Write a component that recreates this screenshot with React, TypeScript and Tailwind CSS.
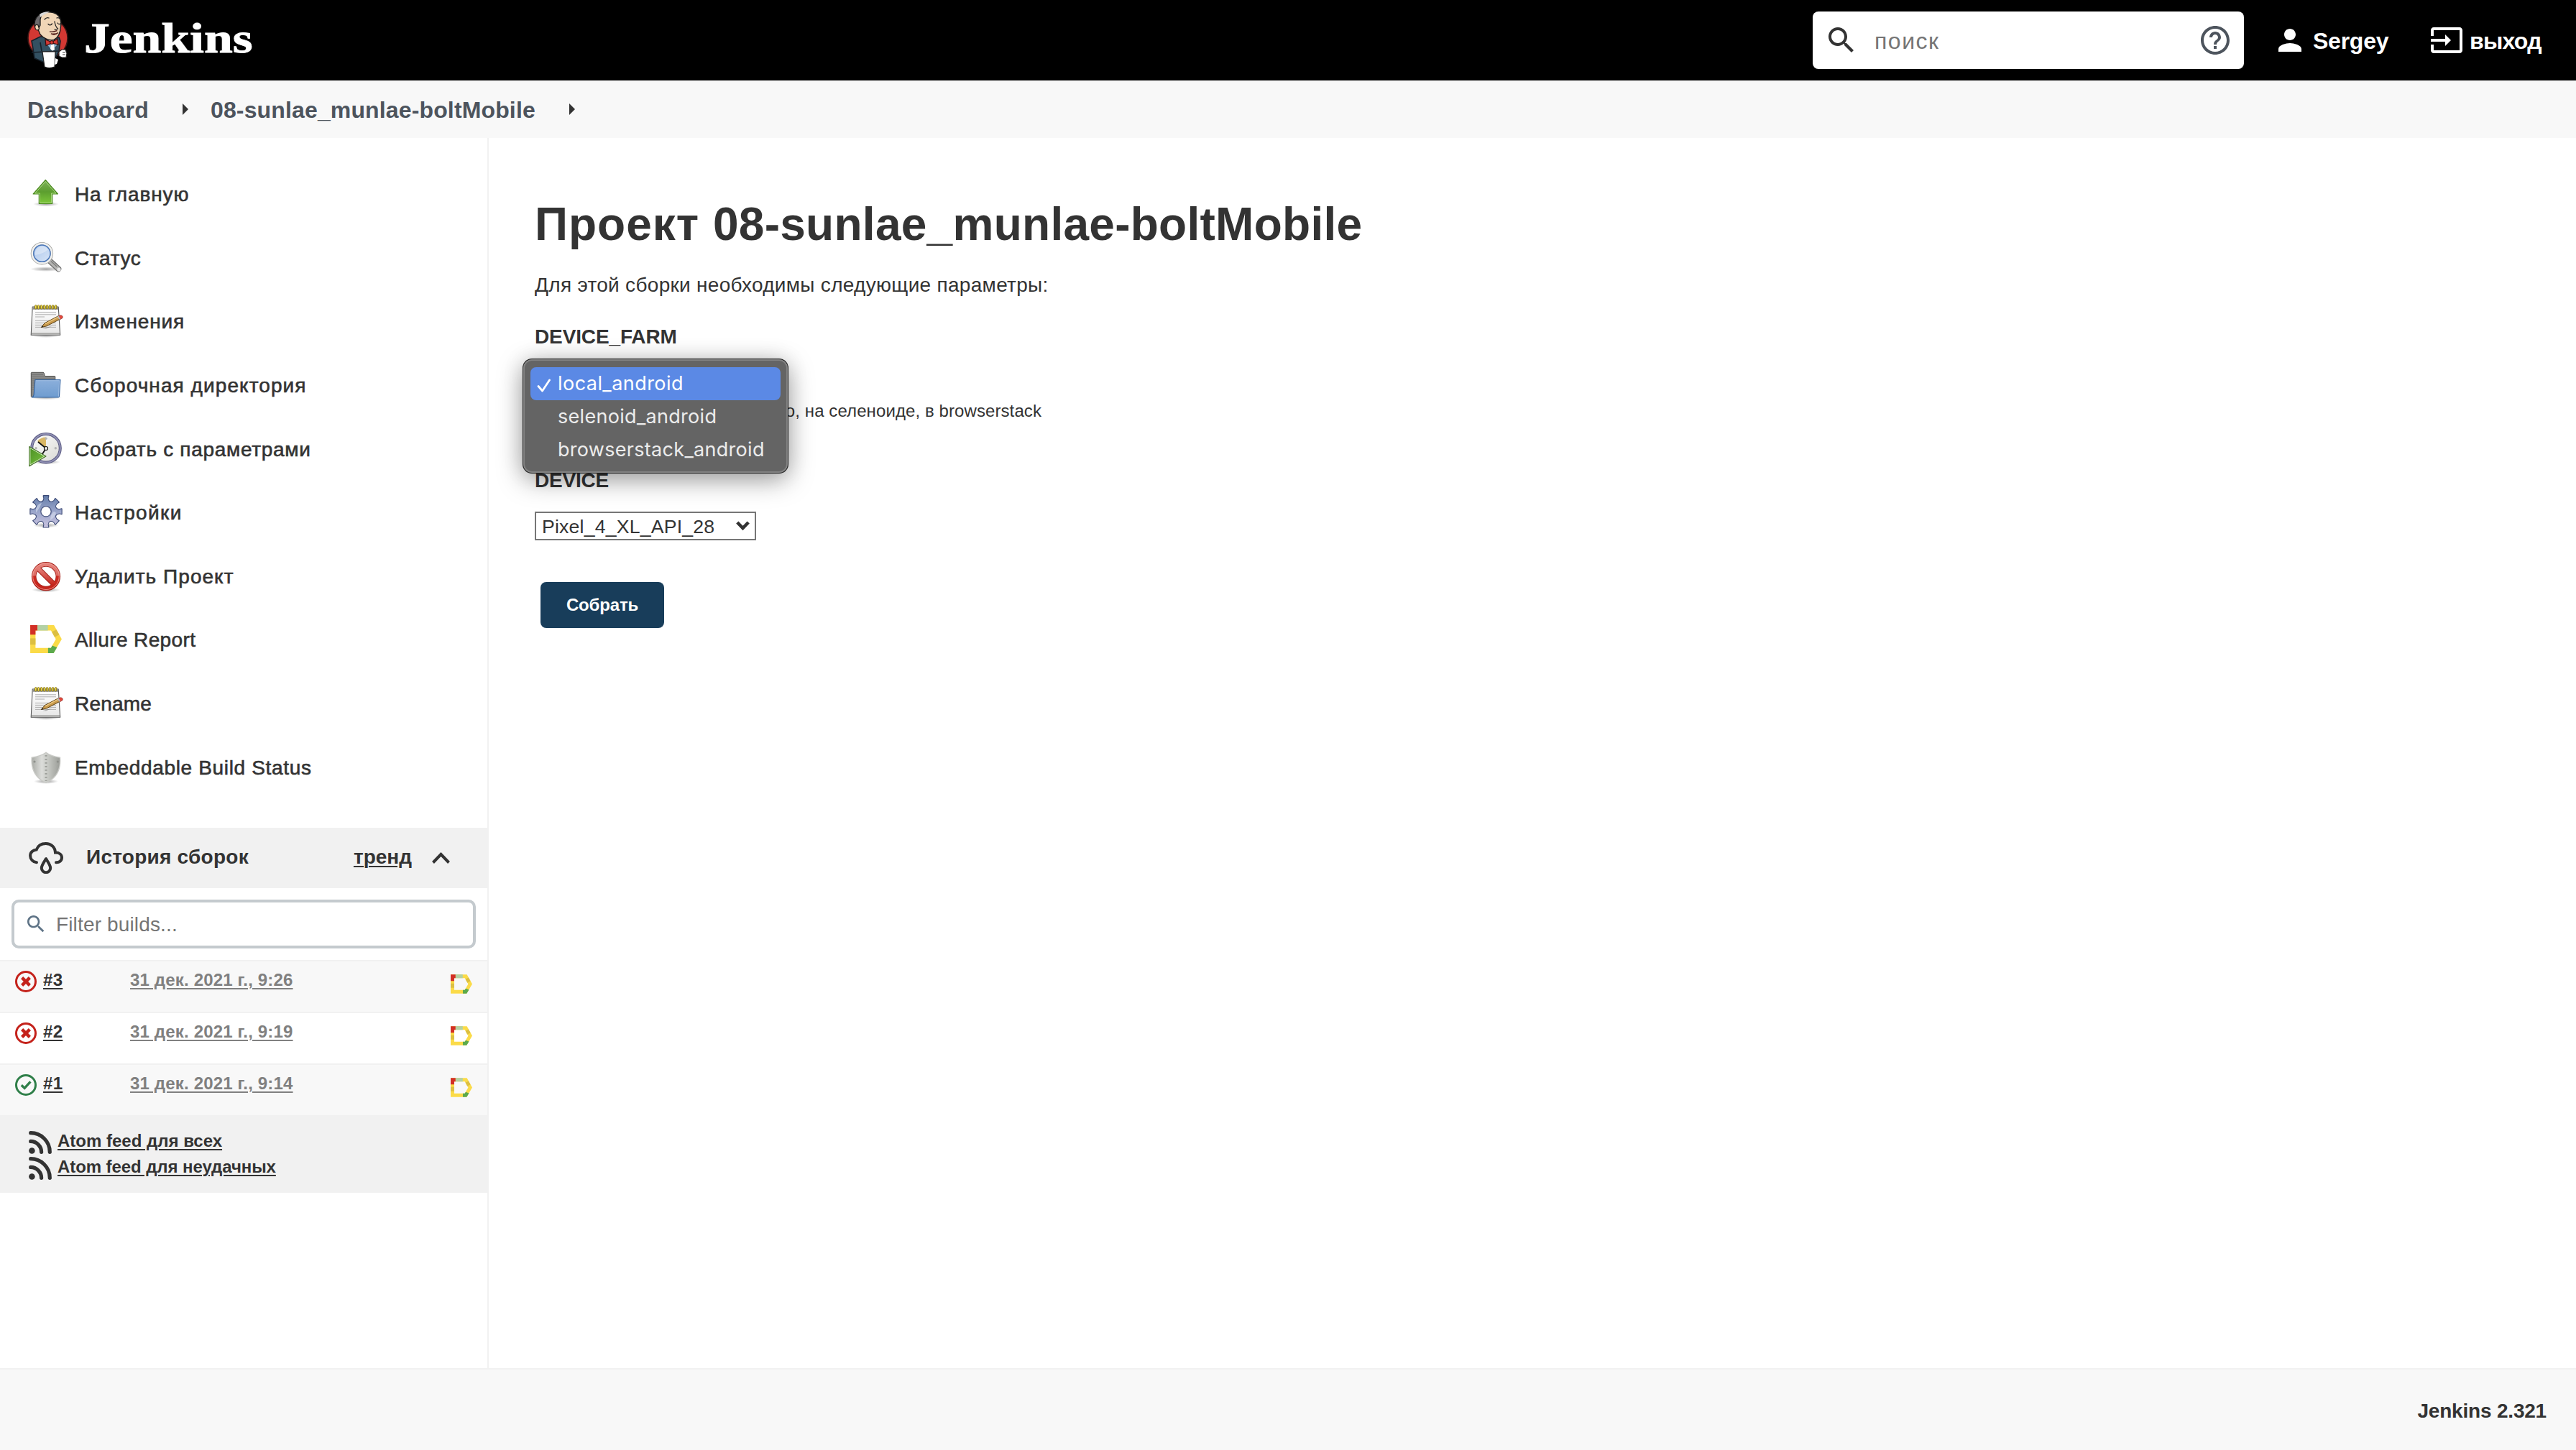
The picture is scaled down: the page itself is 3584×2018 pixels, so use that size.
import React from "react";

function ButlerLogo() {
  return (
    <svg className="h-[82px] w-[60px] shrink-0" viewBox="0 0 60 82" fill="none">
      <circle cx="30.5" cy="38" r="27.5" fill="#d33833" stroke="#3a1513" strokeWidth="1.6" />
      <path d="M8 42 L20 36 L46 37 L48 42 L46 56 L40 68 L26 72 L12 66 Q10 52 8 42Z" fill="#335061" stroke="#16202a" strokeWidth="1.6" />
      <path d="M30 39 L44 39 L43 48 L36 55 L29 46Z" fill="#8fb7d6" />
      <path d="M35 47 L39 47 L40 54 L37 56 L34 53Z" fill="#fff" />
      <path d="M14 14 C17 4 28 0 38 2.5 C47 5 50 12 48.5 22 C48 30 46 37 39 40.5 C32 42 24 38 20 33 L17 26 C12 25 11 20 14 14Z" fill="#f0d6b7" stroke="#1b1b1b" strokeWidth="1.4" />
      <path d="M12 19 C12 10 17 6 22 4 L20 12 L20 20 L17 26 C13 25 12 22 12 19Z" fill="#6d6b6d" stroke="#1b1b1b" strokeWidth="1.3" />
      <path d="M19 5 C23 2 28 .8 33 1.4 L24 6 L20 9Z" fill="#d8d8d8" />
      <path d="M17 20 C13 18 11.5 22 13.5 25.5 C15 28 18 27 18.5 25 Z" fill="#f0d6b7" stroke="#1b1b1b" strokeWidth="1.2" />
      <path d="M26 12 Q29 8.5 32 10 M43 10 Q46 8.5 48 12 M31 18.5 Q34 21.5 36.5 18 M44 17 Q46 20 48.5 17.5 M40 15 Q41 22 44.5 25 Q42 27 40 26" stroke="#222" strokeWidth="1.3" strokeLinecap="round" />
      <path d="M33 29 Q38 30 43.5 27.5 M35 32 Q40 35 45 30.5 Q41 33 35 32Z" stroke="#5d2a22" strokeWidth="1.4" fill="#fff" />
      <path d="M27 40 L36 43.5 L44 39 L45 47 L36 45 L28 48.5Z" fill="#d33833" stroke="#3a0e0c" strokeWidth="1.2" />
      <circle cx="36" cy="44" r="2.4" fill="#d33833" stroke="#3a0e0c" />
      <path d="M8 58 L45 56 M20 44 L22 56" stroke="#16202a" strokeWidth="1.6" />
      <path d="M23 57 L41 57 L40 78 Q32 81 26 78Z" fill="#fff" stroke="#222" strokeWidth="1.2" />
      <path d="M41 66 L45 68 L43 74 L40 75Z" fill="#fff" />
      <path d="M46 57 L50 54 L55 54 L57 59 L56 65 L50 65 L46 63Z" fill="#fff" stroke="#222" strokeWidth="1.2" />
      <path d="M51 58 L55 58 M51 61 L55 61" stroke="#333" strokeWidth="1" />
    </svg>
  );
}

function SearchGlyph({ className }: { className: string }) {
  return (
    <svg className={className} viewBox="0 0 24 24" fill="currentColor">
      <path d="M15.5 14h-.79l-.28-.27C15.41 12.59 16 11.11 16 9.5 16 5.91 13.09 3 9.5 3S3 5.91 3 9.5 5.91 16 9.5 16c1.61 0 3.09-.59 4.23-1.57l.27.28v.79l5 4.99L20.49 19l-4.99-5zm-6 0C7.01 14 5 11.99 5 9.5S7.01 5 9.5 5 14 7.01 14 9.5 11.99 14 9.5 14z" />
    </svg>
  );
}

const iconClass = "h-12 w-12 shrink-0 overflow-visible";

function Shadow({ cy, rx = 18 }: { cy: number; rx?: number }) {
  return <ellipse cx="24" cy={cy} rx={rx} ry="3.4" fill="url(#groundShadow)" />;
}

function ArrowUpIcon() {
  return (
    <svg className={iconClass} viewBox="0 0 48 48">
      <Shadow cy={39} />
      <path d="M23.3 5.5 L40.5 25 H32.7 V38.3 H14.3 V25 H6.2 Z" fill="url(#greenArrow)" stroke="#4a8a1f" strokeWidth="1.2" strokeLinejoin="round" />
      <path d="M23.3 7.6 L38 24 H31.6 V37.2 H15.4 V24 H8.6 Z" fill="none" stroke="#b5dc8d" strokeWidth="0.9" />
    </svg>
  );
}

function MagnifierIcon() {
  return (
    <svg className={iconClass} viewBox="0 0 48 48">
      <Shadow cy={40.5} rx={22} />
      <path d="M28.5 28.5 L41.3 40.3" stroke="#6f6f6f" strokeWidth="8" strokeLinecap="round" />
      <path d="M28.5 28.5 L41.3 40.3" stroke="#b4b4b2" strokeWidth="5.6" strokeLinecap="round" />
      <path d="M31 29.5 L39 37" stroke="#7d7d7b" strokeWidth="1.4" />
      <circle cx="42" cy="41" r="2.6" fill="#e8e8e8" />
      <circle cx="18.4" cy="18.7" r="13.6" fill="url(#lens)" stroke="#a3a3a0" strokeWidth="4.2" />
      <circle cx="18.4" cy="18.7" r="13.6" fill="none" stroke="#f1f1ef" strokeWidth="2.6" />
      <circle cx="18.4" cy="18.7" r="11.6" fill="none" stroke="#4b78bb" strokeWidth="1.5" />
      <path d="M9 21 A10 10 0 0 1 27 13 Q21 19 9 21Z" fill="#fff" opacity=".35" />
    </svg>
  );
}

function NotepadIcon() {
  const rings = [9.7, 13.5, 17.5, 21.5, 25.5, 29.5, 33.5, 37.5];
  return (
    <svg className={iconClass} viewBox="0 0 48 48">
      <Shadow cy={44.6} rx={21} />
      <path d="M5.2 5 H41.2 L43.7 44.3 H3.2 Z" fill="url(#paper)" stroke="#575757" strokeWidth="1.1" strokeLinejoin="round" />
      <path d="M5.4 5.5 H41 L41.2 8.8 H5.2Z" fill="#8c8c88" />
      <path d="M4 41.3 H43 V43.4 H4Z" fill="#a9a9a7" />
      {rings.map((x) => (
        <rect key={x} x={x - 1.2} y="2.6" width="2.5" height="5.4" rx="1.2" fill="#f4df45" stroke="#7d6a10" strokeWidth="0.9" />
      ))}
      <path d="M9 12.8 H38 M9 15.8 H38 M9 19 H22 M9 24.4 H38 M9 27.4 H38 M9 30.4 H38 M9 33.4 H38" stroke="#a6a6a6" strokeWidth="0.9" />
      <path d="M19 35.2 L33 31.5 L24 35.6Z" fill="#000" opacity=".25" />
      <path d="M17.3 33.6 L22.3 27.6 L42 17.3 L44.6 21.6 L25 31.8 Z" fill="#c99a4c" stroke="#5e4213" strokeWidth="1" strokeLinejoin="round" />
      <path d="M23 28.6 L42.5 18.4" stroke="#ecca86" strokeWidth="1.3" />
      <path d="M17.3 33.6 L19.2 31.2 L20.6 32.9Z" fill="#222" />
      <path d="M41 18 L44.5 16.8 Q48 17.5 47 20.5 L43.6 22.6 Z" fill="#e5483c" stroke="#8e2a22" strokeWidth="0.7" />
      <path d="M39.8 18.5 L41.6 17.6 L44.2 22 L42.4 22.8Z" fill="#b9b9b9" />
    </svg>
  );
}

function FolderIcon() {
  return (
    <svg className={iconClass} viewBox="0 0 48 48">
      <Shadow cy={42} rx={22} />
      <path d="M3.3 8.3 Q3.3 7.3 4.3 7.3 H20 Q21 7.3 21.3 8.5 L22.3 12.5 H36 Q36.8 12.5 36.8 13.5 V30 L8 41.5 H4.3 Q3.3 41.5 3.3 40.5Z" fill="#8a8a88" stroke="#4e4e4c" strokeWidth="1" />
      <path d="M4.5 10.5 H20 M4.5 13.5 H21 M4.5 16 H36 M4.5 19 H8 M4.5 22 H8 M4.5 25 H7.5 M4.5 28 H7.5 M4.5 31 H7" stroke="#6f6f6d" strokeWidth="0.8" />
      <path d="M8.8 17.6 H43.9 L42.4 41 Q42.2 42 41.2 42 H4.6 Q6.8 41 7.2 38Z" fill="url(#folderBlue)" stroke="#3566a4" strokeWidth="1.2" strokeLinejoin="round" />
      <path d="M9.8 18.7 H42.7 L41.4 40.8" fill="none" stroke="#a9c4e6" strokeWidth="0.8" />
    </svg>
  );
}

function ClockPlayIcon() {
  return (
    <svg className={iconClass} viewBox="0 0 48 48">
      <Shadow cy={43} rx={20} />
      <circle cx="24" cy="23.7" r="19.8" fill="url(#clockFace)" stroke="#55557f" strokeWidth="4" />
      <circle cx="24" cy="23.7" r="19.8" fill="none" stroke="#8f8fb2" strokeWidth="2.2" />
      <path d="M24 23.7 L12 14 A16 16 0 0 1 24 8.5Z" fill="#d9b765" />
      <path d="M24 24 L13 15 M24 24 L18.5 32.5" stroke="#111" strokeWidth="1.8" />
      <circle cx="24" cy="24" r="2.5" fill="#f5f5f5" stroke="#111" strokeWidth="1.2" />
      <circle cx="24" cy="10.3" r="1.7" fill="#b4b4b4" />
      <circle cx="37.3" cy="23.7" r="1.7" fill="#b4b4b4" />
      <circle cx="10" cy="23.7" r="1.7" fill="#b4b4b4" />
      <path d="M0.8 21.5 L24 35 L0.8 48.8Z" fill="url(#greenPlay)" stroke="#49702f" strokeWidth="1.1" strokeLinejoin="round" />
      <path d="M1.9 23.4 L21.8 35 L1.9 46.8Z" fill="none" stroke="#d9f0c6" strokeWidth="0.9" />
    </svg>
  );
}

function GearIcon() {
  const angles = [0, 45, 90, 135, 180, 225, 270, 315];
  return (
    <svg className={iconClass} viewBox="0 0 48 48">
      <Shadow cy={43} rx={18} />
      <g transform="translate(24 23.8)">
        <g fill="#3c4a76" stroke="#3c4a76" strokeWidth="1.8" strokeLinejoin="round">
          <circle r="14.6" />
          {angles.map((a) => (
            <path key={a} d="M-5.6 -13 Q-3 -15 -2.7 -18.4 L-3.6 -21.8 L3.6 -21.8 L2.7 -18.4 Q3 -15 5.6 -13Z" transform={`rotate(${a})`} />
          ))}
        </g>
        <mask id="gearMask">
          <circle r="14.4" fill="#fff" />
          {angles.map((a) => (
            <path key={a} d="M-5.4 -13 Q-2.8 -15 -2.6 -18.4 L-3.3 -21.6 L3.3 -21.6 L2.6 -18.4 Q2.8 -15 5.4 -13Z" fill="#fff" transform={`rotate(${a})`} />
          ))}
        </mask>
        <rect x="-24" y="-24" width="48" height="48" fill="url(#gearBlue)" mask="url(#gearMask)" />
        <path d="M-14 -4 Q-11 -11 -6 -12 Q-8 -6 -14 2Z M6 12 Q12 9 14 2 L11 0 Q6 4 6 12Z" fill="#dde3f2" opacity=".55" />
        <circle r="7.2" fill="#fff" stroke="#4e5b85" strokeWidth="1.3" />
      </g>
    </svg>
  );
}

function ForbiddenIcon() {
  return (
    <svg className={iconClass} viewBox="0 0 48 48">
      <Shadow cy={44} rx={20} />
      <circle cx="24" cy="25.2" r="16.8" fill="#fff" stroke="#a32019" strokeWidth="6.6" />
      <path d="M12.5 13.7 L35.5 36.7" stroke="#a32019" strokeWidth="7.4" />
      <circle cx="24" cy="25.2" r="16.8" fill="none" stroke="url(#redRing)" strokeWidth="5" />
      <path d="M12.5 13.7 L35.5 36.7" stroke="url(#redBar)" strokeWidth="5.4" />
      <circle cx="24" cy="25.2" r="18.3" fill="none" stroke="#f3a39c" strokeWidth="0.8" />
    </svg>
  );
}

function AllureIcon({ className }: { className: string }) {
  return (
    <svg className={className} viewBox="2 5.8 43.8 39">
      <path d="M2 5.8 H35 L45.8 25.3 L34.5 44.8 H2 Z M9.3 13.3 V37.5 H30.8 L37.6 25.3 L30.8 13.3 Z" fill="#fbdb48" fillRule="evenodd" />
      <path d="M2 5.8 H12 V13.3 H9.3 V19 H2Z" fill="#d22f26" />
      <path d="M12 5.8 H26.5 V13.3 H12Z" fill="#b3d1a4" />
      <path d="M2 24.2 H9.3 V33 H2Z" fill="#dcbf41" />
      <path d="M38.3 12 L42.3 19 L36 22.6 L32 15.4Z" fill="#dcbf41" />
      <path d="M26.8 37.5 H30.8 L32.6 34.3 L39.2 36.8 L34.5 44.8 H26.8Z" fill="#5caa4c" />
    </svg>
  );
}

function ShieldIcon() {
  return (
    <svg className={iconClass} viewBox="0 0 48 48">
      <Shadow cy={44.5} rx={17} />
      <path d="M24 4.2 Q31 9.5 43.5 11.3 Q45 30 34 40 Q29 44.5 24 46.3 Q19 44.5 14 40 Q3 30 4.2 11.3 Q17 9.5 24 4.2Z" fill="url(#steel)" stroke="#c9cac6" strokeWidth="1.4" />
      <path d="M24 8 V44" stroke="#9b9d98" strokeWidth="3" strokeDasharray="1.8 3.2" />
      <circle cx="8" cy="17" r="1.6" fill="#8e908b" />
      <circle cx="40.3" cy="17" r="1.6" fill="#8e908b" />
    </svg>
  );
}

function SharedGradients() {
  return (
    <svg className="absolute h-0 w-0">
      <defs>
        <radialGradient id="groundShadow">
          <stop offset="0" stopColor="#000" stopOpacity=".38" />
          <stop offset="1" stopColor="#000" stopOpacity="0" />
        </radialGradient>
        <linearGradient id="greenArrow" x1="0" y1="0" x2="0" y2="1">
          <stop offset="0" stopColor="#7fb25a" />
          <stop offset=".5" stopColor="#5c9e2f" />
          <stop offset="1" stopColor="#7dc83a" />
        </linearGradient>
        <linearGradient id="greenPlay" x1="0" y1="0" x2="1" y2="1">
          <stop offset="0" stopColor="#4a8f22" />
          <stop offset="1" stopColor="#7cc443" />
        </linearGradient>
        <linearGradient id="lens" x1="0" y1="0" x2="1" y2="1">
          <stop offset="0" stopColor="#a9c4ea" />
          <stop offset="1" stopColor="#dbe7f8" />
        </linearGradient>
        <linearGradient id="paper" x1="0" y1="0" x2="0" y2="1">
          <stop offset="0" stopColor="#ffffff" />
          <stop offset="1" stopColor="#e6e6e6" />
        </linearGradient>
        <linearGradient id="folderBlue" x1="0" y1="0" x2="0" y2="1">
          <stop offset="0" stopColor="#8bafdb" />
          <stop offset="1" stopColor="#6f9ccf" />
        </linearGradient>
        <linearGradient id="clockFace" x1="0" y1="0" x2="1" y2="1">
          <stop offset="0" stopColor="#ffffff" />
          <stop offset="1" stopColor="#d8d8d4" />
        </linearGradient>
        <linearGradient id="gearBlue" x1="0" y1="0" x2="0" y2="1">
          <stop offset="0" stopColor="#5f7aa8" />
          <stop offset=".5" stopColor="#9aa5ca" />
          <stop offset="1" stopColor="#cdc6e2" />
        </linearGradient>
        <linearGradient id="redRing" x1="0" y1="0" x2="0" y2="1">
          <stop offset="0" stopColor="#e58079" />
          <stop offset=".45" stopColor="#dc6a62" />
          <stop offset=".5" stopColor="#cc2b22" />
          <stop offset="1" stopColor="#c5241b" />
        </linearGradient>
        <linearGradient id="redBar" x1="0" y1="0" x2="0" y2="1">
          <stop offset="0" stopColor="#e58079" />
          <stop offset="1" stopColor="#c5241b" />
        </linearGradient>
        <linearGradient id="steel" x1="0" y1="0" x2="1" y2="0">
          <stop offset="0" stopColor="#a9aba6" />
          <stop offset=".35" stopColor="#dcddda" />
          <stop offset=".6" stopColor="#c4c6c1" />
          <stop offset="1" stopColor="#9a9c97" />
        </linearGradient>
      </defs>
    </svg>
  );
}

const tasks: { label: string; icon: React.ReactNode; tracking: string }[] = [
  { label: "На главную", icon: <ArrowUpIcon />, tracking: "tracking-[0.9px]" },
  { label: "Статус", icon: <MagnifierIcon />, tracking: "tracking-[0.65px]" },
  { label: "Изменения", icon: <NotepadIcon />, tracking: "tracking-[0.9px]" },
  { label: "Сборочная директория", icon: <FolderIcon />, tracking: "tracking-[1.07px]" },
  { label: "Собрать с параметрами", icon: <ClockPlayIcon />, tracking: "tracking-[0.7px]" },
  { label: "Настройки", icon: <GearIcon />, tracking: "tracking-[1.38px]" },
  { label: "Удалить Проект", icon: <ForbiddenIcon />, tracking: "tracking-[1.05px]" },
  {
    label: "Allure Report",
    icon: <AllureIcon className="mr-0.5 ml-0.5 h-[39px] w-11 shrink-0" />,
    tracking: "tracking-[0.38px]",
  },
  { label: "Rename", icon: <NotepadIcon />, tracking: "tracking-[0.2px]" },
  { label: "Embeddable Build Status", icon: <ShieldIcon />, tracking: "tracking-[0.66px]" },
];

const builds = [
  { id: "#3", date: "31 дек. 2021 г., 9:26", ok: false, bg: "bg-[#f8f8f8]" },
  { id: "#2", date: "31 дек. 2021 г., 9:19", ok: false, bg: "bg-white" },
  { id: "#1", date: "31 дек. 2021 г., 9:14", ok: true, bg: "bg-[#f8f8f8]" },
];

function StatusIcon({ ok }: { ok: boolean }) {
  return ok ? (
    <svg className="h-[30px] w-[30px] shrink-0" viewBox="0 0 30 30" fill="none" stroke="#2f7f49">
      <circle cx="15" cy="15" r="13.5" strokeWidth="3" />
      <path d="M8.8 15.2 L13.2 19.4 L21.4 10.4" strokeWidth="3.4" />
    </svg>
  ) : (
    <svg className="h-[30px] w-[30px] shrink-0" viewBox="0 0 30 30" fill="none" stroke="#c4221b">
      <circle cx="15" cy="15" r="13.5" strokeWidth="3" />
      <path d="M9.6 9.6 L20.4 20.4 M20.4 9.6 L9.6 20.4" strokeWidth="4.4" />
    </svg>
  );
}

function FeedIcon() {
  return (
    <svg className="mt-1 h-8 w-8 shrink-0" viewBox="0 0 32 32" fill="none" stroke="#333" strokeWidth="5.2" strokeLinecap="round">
      <circle cx="4.4" cy="27.5" r="4.3" fill="#333" stroke="none" />
      <path d="M2.7 14.4 A15 15 0 0 1 17.6 29.3 M2.7 2.7 A26.6 26.6 0 0 1 29.3 29.3" />
    </svg>
  );
}

function Header() {
  return (
    <header className="flex h-28 shrink-0 items-center bg-black text-[32px] font-bold text-white">
      <div className="ml-9 flex h-full items-center">
        <ButlerLogo />
        <span className="ml-[21px] w-[240px] origin-left scale-x-[1.192] pb-1.5 font-['Liberation_Serif'] text-[60px] leading-[76px] [-webkit-text-stroke:0.9px_#fff]">
          Jenkins
        </span>
      </div>
      <div className="mr-10 ml-auto flex h-20 w-[600px] items-center rounded-lg bg-white pr-4 pl-4 text-[#333]">
        <SearchGlyph className="h-12 w-12 shrink-0" />
        <span className="ml-[22px] flex-1 pt-0.5 font-normal tracking-[1.5px] text-[#757575]">поиск</span>
        <svg className="h-12 w-12 shrink-0" viewBox="0 0 24 24" fill="#4d545d">
          <path d="M11 18h2v-2h-2v2zm1-16C6.48 2 2 6.48 2 12s4.48 10 10 10 10-4.48 10-10S17.52 2 12 2zm0 18c-4.41 0-8-3.59-8-8s3.59-8 8-8 8 3.59 8 8-3.59 8-8 8zm0-14c-2.21 0-4 1.79-4 4h2c0-1.1.9-2 2-2s2 .9 2 2c0 2-3 1.75-3 5h2c0-2.25 3-2.5 3-5 0-2.21-1.79-4-4-4z" />
        </svg>
      </div>
      <a className="flex h-12 w-[218px] items-center">
        <svg className="h-12 w-12 shrink-0" viewBox="0 0 24 24" fill="#fff">
          <path d="M12 12c2.21 0 4-1.79 4-4s-1.79-4-4-4-4 1.79-4 4 1.79 4 4 4zm0 2c-2.67 0-8 1.34-8 4v2h16v-2c0-2.66-5.33-4-8-4z" />
        </svg>
        <span className="ml-2 pt-0.5 tracking-[-0.25px]">Sergey</span>
      </a>
      <a className="flex h-12 w-[204px] items-center">
        <svg className="h-12 w-12 shrink-0" viewBox="0 0 24 24" fill="#fff">
          <path d="M21 3.01H3c-1.1 0-2 .9-2 2V9h2V4.99h18v14.03H3V15H1v4.01c0 1.1.9 1.98 2 1.98h18c1.1 0 2-.88 2-1.98v-14c0-1.11-.9-2-2-2zM11 16l4-4-4-4v3H1v2h10v3z" />
        </svg>
        <span className="ml-2 pt-0.5 tracking-[-0.75px]">выход</span>
      </a>
    </header>
  );
}

function Crumb() {
  return (
    <svg className="h-4 w-2" viewBox="0 0 8 16" fill="#333">
      <path d="M0 0 L8 8 L0 16Z" />
    </svg>
  );
}

function Sidebar() {
  return (
    <aside className="flex w-[680px] shrink-0 flex-col border-r-2 border-[#f1f1f1] pt-[34px]">
      <nav className="mb-10 flex flex-col">
        {tasks.map((t) => (
          <a key={t.label} className="flex h-[88.6px] items-center pl-10">
            <span className="-mt-0.5 flex w-16 items-center">{t.icon}</span>
            <span className={`pt-0.5 text-[28px] leading-10 [-webkit-text-stroke:0.6px_#333] ${t.tracking}`}>{t.label}</span>
          </a>
        ))}
      </nav>

      <div className="flex h-[84px] items-center bg-[#f1f1f1] pr-[52px] pl-10 text-[28px] font-bold">
        <svg className="h-11 w-12 shrink-0" viewBox="0 0 48 44" fill="none" stroke="#333" strokeWidth="4" strokeLinecap="round">
          <path d="M11 28.3 C5.5 27.5 2.1 23.5 2.1 19 C2.1 14.2 6 10.8 10.8 10.4 C12.6 5.3 17.5 2 23.8 2 C31 2 36.8 7 37 14.6 C42.5 14.6 46 17.6 46 21.6 C46 25.8 42.5 28.6 38 28.3" />
          <path d="M24 23.2 C20.5 28.6 17.8 32.4 17.8 36 A6.2 6.2 0 0 0 30.2 36 C30.2 32.4 27.5 28.6 24 23.2Z" strokeLinejoin="round" />
        </svg>
        <span className="ml-8 -mt-0.5 tracking-[0.25px]">История сборок</span>
        <span className="-mt-0.5 ml-auto underline decoration-2 underline-offset-[3px]">тренд</span>
        <svg className="ml-7 h-4 w-[25px]" viewBox="0 0 25 16" fill="none" stroke="#333" strokeWidth="4">
          <path d="M1.5 14.5 L12.5 3 L23.5 14.5" />
        </svg>
      </div>

      <div className="flex h-[100px] items-center px-4">
        <div className="flex h-[68px] w-[646px] items-center rounded-[10px] border-4 border-[#c4cace] pl-3.5">
          <SearchGlyph className="h-8 w-8 text-[#5e7386]" />
          <span className="ml-3 pt-0.5 text-[28px] tracking-[0.15px] text-[#757575]">Filter builds...</span>
        </div>
      </div>

      {builds.map((b) => (
        <div key={b.id} className={`flex h-[72px] items-start border-t-2 border-[#f1f1f1] pr-[21px] pl-[21px] text-2xl leading-7 font-bold ${b.bg}`}>
          <span className="mt-[13px]">
            <StatusIcon ok={b.ok} />
          </span>
          <span className="mt-3 ml-[9px] w-[121px] tracking-[0.3px] underline decoration-2 underline-offset-[3px]">
            {b.id}
          </span>
          <span className="mt-3 tracking-[0.17px] text-[#808080] underline decoration-2 underline-offset-[3px]">{b.date}</span>
          <AllureIcon className="mt-[18.5px] ml-auto h-[27px] w-[30px]" />
        </div>
      ))}

      <div className="flex h-[108px] flex-col bg-[#f1f1f1] pt-[18px] pl-10 text-2xl font-bold">
        <a className="flex h-9 items-start leading-9">
          <FeedIcon />
          <span className="ml-2 underline decoration-2 underline-offset-[3px]">Atom feed для всех</span>
        </a>
        <a className="flex h-9 items-start leading-9">
          <FeedIcon />
          <span className="ml-2 tracking-[-0.08px] underline decoration-2 underline-offset-[3px]">Atom feed для неудачных</span>
        </a>
      </div>
    </aside>
  );
}

function DeviceFarmMenu() {
  return (
    <div className="absolute -top-3 -left-4 h-[158px] w-[368px] rounded-xl border-2 border-[#838383] bg-[#646464] px-2 pt-[9px] font-['Inter'] text-[27px] tracking-[0.3px] text-[#ececec] shadow-[0_0_0_1px_#1c1c1c,0_10px_36px_rgba(0,0,0,0.36),0_0_30px_rgba(0,0,0,0.12)]">
      <div className="flex h-[46px] items-center rounded-lg bg-[#5b89e5] pl-[9px] text-white">
        <svg className="mt-1 h-[19px] w-5" viewBox="0 0 20 19" fill="none" stroke="#fff" strokeWidth="2.8" strokeLinecap="round" strokeLinejoin="round">
          <path d="M2 10.5 L7.6 17 L17.5 2" />
        </svg>
        <span className="ml-[9px] pt-px tracking-[0.45px]">local_android</span>
      </div>
      <div className="flex h-[46px] items-center pt-px pl-[38px]">selenoid_android</div>
      <div className="flex h-[46px] items-center pt-px pl-[38px]">browserstack_android</div>
    </div>
  );
}

function Main() {
  return (
    <main className="flex flex-1 flex-col items-start pt-20 pl-16">
      <h1 className="text-[64px] leading-[80px] font-bold tracking-[0.27px]">
        <span className="tracking-[1px]">Проект </span>08-sunlae_munlae-boltMobile
      </h1>
      <p className="mt-[25px] text-[28px] leading-10 tracking-[0.3px]">Для этой сборки необходимы следующие параметры:</p>

      <div className="mt-8 text-[28px] leading-10 font-bold tracking-[-0.13px]">DEVICE_FARM</div>
      <div className="relative mt-[23px] h-10">
        <DeviceFarmMenu />
      </div>
      <p className="mt-1 flex w-[705px] justify-end text-2xl leading-8 tracking-[0.09px] whitespace-nowrap">
        о, на селеноиде, в browserstack
      </p>

      <div className="mt-[61px] text-[28px] leading-10 font-bold tracking-[-0.2px]">DEVICE</div>
      <div className="mt-[23px] flex h-10 w-[308px] items-center border-2 border-[#767676] bg-white pr-[7px] pl-2 text-[26.67px] tracking-[0.19px]">
        <span className="pt-0.5">Pixel_4_XL_API_28</span>
        <svg className="ml-auto h-3.5 w-[19px]" viewBox="0 0 19 14" fill="none" stroke="#333" strokeWidth="4.6">
          <path d="M1.8 2 L9.5 10 L17.2 2" />
        </svg>
      </div>
      <button className="mt-[58px] ml-2 h-16 w-[172px] rounded-lg bg-[#183d5a] text-2xl font-bold tracking-[-0.18px] text-white">Собрать</button>
    </main>
  );
}

export default function App() {
  return (
    <div className="flex h-[2018px] w-[3584px] flex-col overflow-hidden bg-white font-['Liberation_Sans',sans-serif] text-[#333]">
      <SharedGradients />
      <Header />
      <div className="flex h-20 shrink-0 items-center bg-[#f8f8f8] pl-[38px] text-[32px] font-bold text-[#4d545d]">
        <span className="w-[216px] pt-0.5 tracking-[0.2px]">Dashboard</span>
        <Crumb />
        <span className="ml-[31px] w-[499px] pt-0.5 tracking-[0.14px]">08-sunlae_munlae-boltMobile</span>
        <Crumb />
      </div>
      <div className="flex flex-1">
        <Sidebar />
        <Main />
      </div>
      <footer className="flex h-[114px] shrink-0 items-center justify-end border-t-2 border-[#f1f1f1] bg-[#f8f8f8] pt-[3px] pr-[41px] text-[28px] font-bold tracking-[-0.2px]">
        Jenkins 2.321
      </footer>
    </div>
  );
}
